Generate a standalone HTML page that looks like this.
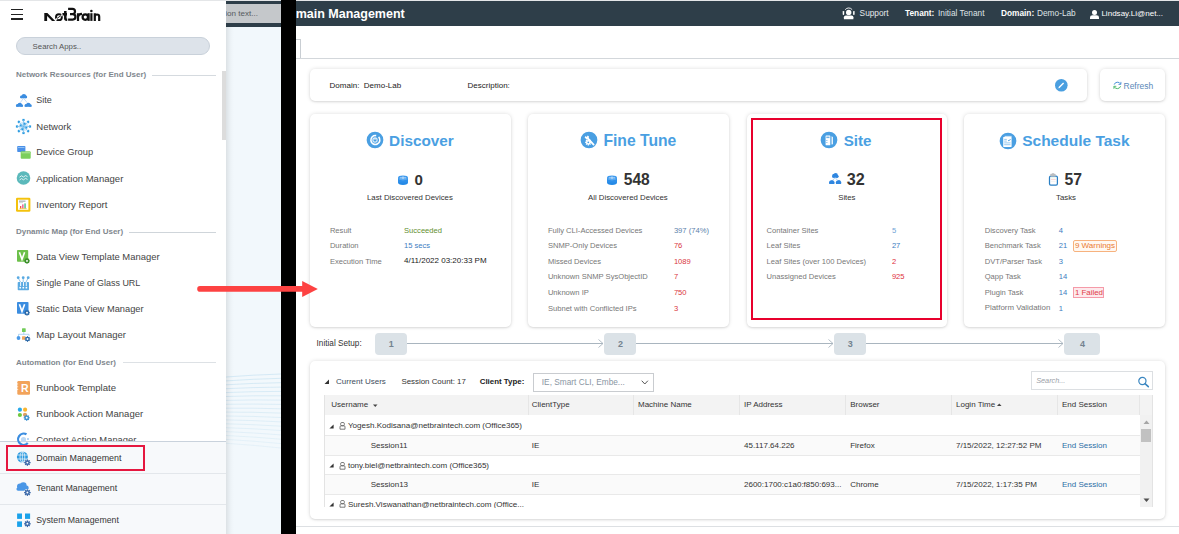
<!DOCTYPE html>
<html><head><meta charset="utf-8">
<style>
*{margin:0;padding:0;box-sizing:border-box}
html,body{width:1179px;height:534px;overflow:hidden;background:#fff;font-family:"Liberation Sans",sans-serif;color:#333}
.a{position:absolute}
.t{position:absolute;white-space:nowrap;line-height:1}
/* sidebar */
#side{position:absolute;left:0;top:0;width:226px;height:534px;background:#fff;overflow:hidden}
.si{font-size:9.4px;color:#444;left:36px}
.sh{font-size:8px;font-weight:bold;color:#7f878e;left:16px}
.shl{position:absolute;height:1px;background:#d5d9dd;right:10px}
.card{position:absolute;background:#fff;border-radius:5px;box-shadow:0 0 4px rgba(0,0,0,.13),0 1px 2px rgba(0,0,0,.09)}
.ct{font-size:15.5px;font-weight:bold;color:#4a9fe2}
.cn{font-size:15.5px;font-weight:bold;color:#333}
.cs{font-size:7.8px;color:#333}
.cl{font-size:7.6px;color:#6d6d6d}
.cv{font-size:7.6px}
.hd{font-size:8.3px;color:#fff}
</style></head><body>

<!-- main window -->
<div class="a" style="left:0;top:0;width:1179px;height:1px;background:#e4e6e8"></div>
<div class="a" style="left:226px;top:1px;width:953px;height:25px;background:#2e3e49"></div>
<div class="t" style="left:279px;top:8.2px;font-size:12.5px;font-weight:bold;color:#fff">Domain Management</div>

<!-- header right -->
<div class="t hd" style="left:859.6px;top:8.9px;color:#e6e9ec">Support</div>
<div class="t hd" style="left:905px;top:8.9px;font-weight:bold">Tenant:</div>
<div class="t hd" style="left:938px;top:8.9px;color:#dfe3e6">Initial Tenant</div>
<div class="t hd" style="left:1001px;top:8.9px;font-weight:bold">Domain:</div>
<div class="t hd" style="left:1037px;top:8.9px;color:#dfe3e6">Demo-Lab</div>
<div class="t hd" style="left:1101.4px;top:10.1px;font-size:8.05px">Lindsay.Li@net...</div>

<!-- tab & line -->
<div class="a" style="left:280px;top:39px;width:21px;height:20px;border:1px solid #c9ced3;border-bottom:none;background:#fff"></div>
<div class="a" style="left:296px;top:58px;width:883px;height:1px;background:#d3d7db"></div>

<!-- domain card -->
<div class="card" style="left:310px;top:69px;width:777px;height:32px"></div>
<div class="t" style="left:329.6px;top:81.7px;font-size:8px;color:#222">Domain:&nbsp; Demo-Lab</div>
<div class="t" style="left:467.6px;top:81.7px;font-size:8px;color:#222">Description:</div>
<div class="card" style="left:1100px;top:69px;width:65px;height:32px"></div>
<div class="t" style="left:1123.5px;top:81.6px;font-size:8.5px;color:#5a88b8">Refresh</div>

<!-- cards -->
<div class="card" style="left:310px;top:113.5px;width:201px;height:213.5px"></div>
<div class="card" style="left:528px;top:113.5px;width:201px;height:213.5px"></div>
<div class="card" style="left:747px;top:113.5px;width:200px;height:213.5px"></div>
<div class="card" style="left:964px;top:113.5px;width:201px;height:213.5px"></div>
<div class="a" style="left:751px;top:118px;width:191px;height:202px;border:2px solid #e8002d"></div>

<div class="t ct" style="left:389.1px;top:133.15px;font-size:15.3px">Discover</div>
<div class="t ct" style="left:603.4px;top:132.81px;font-size:15.7px">Fine Tune</div>
<div class="t ct" style="left:843.7px;top:133.23px;font-size:15.2px">Site</div>
<div class="t ct" style="left:1022.2px;top:132.98px;font-size:15.5px">Schedule Task</div>

<div class="t cn" style="left:414.4px;top:172.32px;font-size:15.1px">0</div>
<div class="t cn" style="left:623.8px;top:171.91px;font-size:15.58px">548</div>
<div class="t cn" style="left:846.7px;top:171.40px;font-size:16.18px">32</div>
<div class="t cn" style="left:1064.6px;top:172.08px;font-size:15.73px">57</div>

<div class="t cs" style="left:367px;top:193.6px">Last Discovered Devices</div>
<div class="t cs" style="left:588px;top:193.6px">All Discovered Devices</div>
<div class="t cs" style="left:838.2px;top:193.6px">Sites</div>
<div class="t cs" style="left:1056px;top:193.6px">Tasks</div>

<div class="t " style="left:329.9px;top:226.57px;font-size:7.6px;color:#777">Result</div>
<div class="t " style="left:404px;top:226.57px;font-size:7.6px;color:#5f8f2f">Succeeded</div>
<div class="t " style="left:329.9px;top:242.17px;font-size:7.6px;color:#777">Duration</div>
<div class="t " style="left:404px;top:242.17px;font-size:7.6px;color:#3d7dbf">15 secs</div>
<div class="t " style="left:329.9px;top:257.77px;font-size:7.6px;color:#777">Execution Time</div>
<div class="t " style="left:404px;top:257.43px;font-size:8px;color:#222">4/11/2022 03:20:33 PM</div>
<div class="t " style="left:547.9px;top:226.57px;font-size:7.6px;color:#777">Fully CLI-Accessed Devices</div>
<div class="t " style="left:673.9px;top:226.57px;font-size:7.6px;color:#5b82ab">397 (74%)</div>
<div class="t " style="left:547.9px;top:242.17px;font-size:7.6px;color:#777">SNMP-Only Devices</div>
<div class="t " style="left:673.9px;top:242.17px;font-size:7.6px;color:#d9363e">76</div>
<div class="t " style="left:547.9px;top:257.77px;font-size:7.6px;color:#777">Missed Devices</div>
<div class="t " style="left:673.9px;top:257.77px;font-size:7.6px;color:#d9363e">1089</div>
<div class="t " style="left:547.9px;top:273.37px;font-size:7.6px;color:#777">Unknown SNMP SysObjectID</div>
<div class="t " style="left:673.9px;top:273.37px;font-size:7.6px;color:#d9363e">7</div>
<div class="t " style="left:547.9px;top:288.97px;font-size:7.6px;color:#777">Unknown IP</div>
<div class="t " style="left:673.9px;top:288.97px;font-size:7.6px;color:#d9363e">750</div>
<div class="t " style="left:547.9px;top:304.57px;font-size:7.6px;color:#777">Subnet with Conflicted IPs</div>
<div class="t " style="left:673.9px;top:304.57px;font-size:7.6px;color:#d9363e">3</div>
<div class="t " style="left:766.5px;top:226.57px;font-size:7.6px;color:#777">Container Sites</div>
<div class="t " style="left:891.9px;top:226.57px;font-size:7.6px;color:#6fa3d6">5</div>
<div class="t " style="left:766.5px;top:242.17px;font-size:7.6px;color:#777">Leaf Sites</div>
<div class="t " style="left:891.9px;top:242.17px;font-size:7.6px;color:#3d7dbf">27</div>
<div class="t " style="left:766.5px;top:257.77px;font-size:7.6px;color:#777">Leaf Sites (over 100 Devices)</div>
<div class="t " style="left:891.9px;top:257.77px;font-size:7.6px;color:#e0303a">2</div>
<div class="t " style="left:766.5px;top:273.37px;font-size:7.6px;color:#777">Unassigned Devices</div>
<div class="t " style="left:891.9px;top:273.37px;font-size:7.6px;color:#e0303a">925</div>
<div class="t " style="left:984.7px;top:226.57px;font-size:7.6px;color:#777">Discovery Task</div>
<div class="t " style="left:1058.7px;top:226.57px;font-size:7.6px;color:#3d7dbf">4</div>
<div class="t " style="left:984.7px;top:242.17px;font-size:7.6px;color:#777">Benchmark Task</div>
<div class="t " style="left:1058.7px;top:242.17px;font-size:7.6px;color:#3d7dbf">21</div>
<div class="t " style="left:984.7px;top:257.77px;font-size:7.6px;color:#777">DVT/Parser Task</div>
<div class="t " style="left:1058.7px;top:257.77px;font-size:7.6px;color:#3d7dbf">3</div>
<div class="t " style="left:984.7px;top:273.37px;font-size:7.6px;color:#777">Qapp Task</div>
<div class="t " style="left:1058.7px;top:273.37px;font-size:7.6px;color:#3d7dbf">14</div>
<div class="t " style="left:984.7px;top:288.97px;font-size:7.6px;color:#777">Plugin Task</div>
<div class="t " style="left:1058.7px;top:288.97px;font-size:7.6px;color:#3d7dbf">14</div>
<div class="t " style="left:984.7px;top:304.31px;font-size:7.9px;color:#777">Platform Validation</div>
<div class="t " style="left:1058.7px;top:304.57px;font-size:7.6px;color:#3d7dbf">1</div>
<div class="a" style="left:1073px;top:239.5px;width:44px;height:12.3px;border:1px solid #f7b27e;background:#fff8f1;border-radius:2px"></div>
<div class="t " style="left:1074.9px;top:241.83px;font-size:8px;color:#ea7b33">9 Warnings</div>
<div class="a" style="left:1073px;top:287px;width:31px;height:11.3px;border:1px solid #f59aa8;background:#fde9ec;border-radius:0"></div>
<div class="t " style="left:1074.9px;top:288.71px;font-size:7.9px;color:#e0404a">1 Failed</div>
<div class="t " style="left:316.6px;top:340.1px;font-size:8.2px;color:#333">Initial Setup:</div>
<div class="a" style="left:375px;top:333.2px;width:31.5px;height:21.4px;background:#dbe2e7;border-radius:4px"></div>
<div class="t " style="left:388.85px;top:339.98px;font-size:9px;color:#74838f;font-weight:bold">1</div>
<div class="a" style="left:604px;top:333.2px;width:32px;height:21.4px;background:#dbe2e7;border-radius:4px"></div>
<div class="t " style="left:618.10px;top:339.98px;font-size:9px;color:#74838f;font-weight:bold">2</div>
<div class="a" style="left:834px;top:333.2px;width:31.5px;height:21.4px;background:#dbe2e7;border-radius:4px"></div>
<div class="t " style="left:847.85px;top:339.98px;font-size:9px;color:#74838f;font-weight:bold">3</div>
<div class="a" style="left:1063.6px;top:333.2px;width:36.4px;height:21.4px;background:#dbe2e7;border-radius:4px"></div>
<div class="t " style="left:1079.90px;top:339.98px;font-size:9px;color:#74838f;font-weight:bold">4</div>
<div class="a" style="left:406.5px;top:343px;width:196.5px;height:1px;background:#a9b5bf"></div>
<svg class="a" style="left:598px;top:339px" width="6" height="9"><path d="M0.5 0.5 L5 4.5 L0.5 8.5" fill="none" stroke="#a9b5bf" stroke-width="0.9"/></svg>
<div class="a" style="left:636px;top:343px;width:197px;height:1px;background:#a9b5bf"></div>
<svg class="a" style="left:828px;top:339px" width="6" height="9"><path d="M0.5 0.5 L5 4.5 L0.5 8.5" fill="none" stroke="#a9b5bf" stroke-width="0.9"/></svg>
<div class="a" style="left:865.5px;top:343px;width:197.0999999999999px;height:1px;background:#a9b5bf"></div>
<svg class="a" style="left:1057.6px;top:339px" width="6" height="9"><path d="M0.5 0.5 L5 4.5 L0.5 8.5" fill="none" stroke="#a9b5bf" stroke-width="0.9"/></svg>
<div class="card" style="left:310px;top:361px;width:855px;height:158px"></div>
<div class="a" style="left:296px;top:526px;width:883px;height:1px;background:#dde0e3"></div>
<svg class="a" style="left:323.5px;top:379px" width="6" height="6"><path d="M5 0.5 L5 5 L0.5 5 Z" fill="#333"/></svg>
<div class="t " style="left:336px;top:378.03px;font-size:8px;color:#3d4d5c">Current Users</div>
<div class="t " style="left:401.4px;top:378.11px;font-size:7.9px;color:#333">Session Count: 17</div>
<div class="t " style="left:479.7px;top:378.11px;font-size:7.9px;color:#222;font-weight:bold">Client Type:</div>
<div class="a" style="left:533.4px;top:373.3px;width:120.2px;height:19px;border:1px solid #c9ccd0;background:#fff"></div>
<div class="t " style="left:541.8px;top:378.47px;font-size:8.3px;color:#8a96a3">IE, Smart CLI, Embe...</div>
<svg class="a" style="left:641px;top:379.5px" width="8" height="6"><path d="M0.7 0.7 L3.8 4 L6.9 0.7" fill="none" stroke="#555" stroke-width="1"/></svg>
<div class="a" style="left:1031.3px;top:371.3px;width:121.4px;height:18.9px;border:1px solid #dcdfe2;background:#fff"></div>
<div class="t " style="left:1036.2px;top:377.42px;font-size:7.3px;color:#9aa0a6;font-style:italic">Search...</div>
<svg class="a" style="left:1137px;top:376px" width="14" height="13"><circle cx="5.4" cy="5" r="3.6" fill="none" stroke="#3a86c0" stroke-width="1.2"/><path d="M8 7.7 L11.3 10.6" stroke="#3a86c0" stroke-width="1.6" stroke-linecap="round"/></svg>
<div class="a" style="left:323.5px;top:394.8px;width:829.5px;height:112.6px;border-left:1px solid #e3e3e3;border-right:1px solid #e3e3e3;overflow:hidden">
<div class="a" style="left:0;top:0;width:830px;height:20.7px;background:#f3f3f3"></div>
<div class="a" style="left:203.0px;top:0;width:1px;height:20.2px;background:#e6e6e6"></div>
<div class="a" style="left:308.7px;top:0;width:1px;height:20.2px;background:#e6e6e6"></div>
<div class="a" style="left:414.9px;top:0;width:1px;height:20.2px;background:#e6e6e6"></div>
<div class="a" style="left:520.5px;top:0;width:1px;height:20.2px;background:#e6e6e6"></div>
<div class="a" style="left:626.6px;top:0;width:1px;height:20.2px;background:#e6e6e6"></div>
<div class="a" style="left:732.7px;top:0;width:1px;height:20.2px;background:#e6e6e6"></div>
<div class="a" style="left:814.6px;top:0;width:1px;height:20.2px;background:#e6e6e6"></div>
<div class="a" style="left:815px;top:20.2px;width:14px;height:93px;background:#f1f1f1"></div>
<div class="a" style="left:0;top:20.7px;width:815px;height:20.5px;background:#fff;border-bottom:1px solid #e9e9e9"></div>
<div class="a" style="left:0;top:41.2px;width:815px;height:20.2px;background:#fafafa;border-bottom:1px solid #e9e9e9"></div>
<div class="a" style="left:0;top:61.4px;width:815px;height:18.9px;background:#fff;border-bottom:1px solid #e9e9e9"></div>
<div class="a" style="left:0;top:80.3px;width:815px;height:20.4px;background:#fafafa;border-bottom:1px solid #e9e9e9"></div>
<div class="a" style="left:0;top:100.7px;width:815px;height:24.7px;background:#fff;border-bottom:1px solid #e9e9e9"></div>
</div>
<div class="t " style="left:331.3px;top:401.43px;font-size:8px;color:#333">Username</div>
<div class="t " style="left:531.8px;top:401.43px;font-size:8px;color:#333">ClientType</div>
<div class="t " style="left:638px;top:401.43px;font-size:8px;color:#333">Machine Name</div>
<div class="t " style="left:744px;top:401.43px;font-size:8px;color:#333">IP Address</div>
<div class="t " style="left:850.2px;top:401.43px;font-size:8px;color:#333">Browser</div>
<div class="t " style="left:956px;top:401.43px;font-size:8px;color:#333">Login Time</div>
<div class="t " style="left:1062px;top:401.43px;font-size:8px;color:#333">End Session</div>
<svg class="a" style="left:372.5px;top:403.6px" width="5" height="4"><path d="M0 0.5 L4.5 0.5 L2.25 3 Z" fill="#444"/></svg>
<svg class="a" style="left:997px;top:402.8px" width="5" height="4"><path d="M0 3 L4.5 3 L2.25 0.5 Z" fill="#444"/></svg>
<svg class="a" style="left:1142.5px;top:419.5px" width="7" height="5"><path d="M0.5 4 L6.5 4 L3.5 0.5 Z" fill="#a6a6a6"/></svg>
<div class="a" style="left:1140.5px;top:429px;width:10.5px;height:13px;background:#c1c1c1"></div>
<svg class="a" style="left:1142.5px;top:497.5px" width="7" height="5"><path d="M0.5 0.5 L6.5 0.5 L3.5 4 Z" fill="#505050"/></svg>
<svg class="a" style="left:328.5px;top:423.9px" width="6" height="6"><path d="M4.6 0.4 L4.6 4.6 L0.4 4.6 Z" fill="#333"/></svg>
<svg class="a" style="left:338.5px;top:422.3px" width="8" height="9"><rect x="1.6" y="0.5" width="3.8" height="3.2" rx="1.3" fill="none" stroke="#666" stroke-width="0.85"/><path d="M1 7.2 V4.9 Q1 3.8 2 3.8 H5 Q6 3.8 6 4.9 V7.2 Z" fill="none" stroke="#666" stroke-width="0.85"/></svg>
<div class="t " style="left:347.9px;top:422.44px;font-size:8.05px;color:#333">Yogesh.Kodisana@netbraintech.com (Office365)</div>
<div class="t " style="left:370.7px;top:441.93px;font-size:8px;color:#333">Session11</div>
<div class="t " style="left:531.7px;top:441.93px;font-size:8px;color:#333">IE</div>
<div class="t " style="left:744px;top:441.93px;font-size:8px;color:#333">45.117.64.226</div>
<div class="t " style="left:850.2px;top:441.93px;font-size:8px;color:#333">Firefox</div>
<div class="t " style="left:956px;top:441.93px;font-size:8px;color:#333">7/15/2022, 12:27:52 PM</div>
<div class="t " style="left:1062px;top:441.93px;font-size:8px;color:#2c6ea6">End Session</div>
<svg class="a" style="left:328.5px;top:463.4px" width="6" height="6"><path d="M4.6 0.4 L4.6 4.6 L0.4 4.6 Z" fill="#333"/></svg>
<svg class="a" style="left:338.5px;top:461.8px" width="8" height="9"><rect x="1.6" y="0.5" width="3.8" height="3.2" rx="1.3" fill="none" stroke="#666" stroke-width="0.85"/><path d="M1 7.2 V4.9 Q1 3.8 2 3.8 H5 Q6 3.8 6 4.9 V7.2 Z" fill="none" stroke="#666" stroke-width="0.85"/></svg>
<div class="t " style="left:347.9px;top:461.94px;font-size:8.05px;color:#333">tony.biel@netbraintech.com (Office365)</div>
<div class="t " style="left:370.7px;top:481.43px;font-size:8px;color:#333">Session13</div>
<div class="t " style="left:531.7px;top:481.43px;font-size:8px;color:#333">IE</div>
<div class="t " style="left:744px;top:481.43px;font-size:8px;color:#333">2600:1700:c1a0:f850:693...</div>
<div class="t " style="left:850.2px;top:481.43px;font-size:8px;color:#333">Chrome</div>
<div class="t " style="left:956px;top:481.43px;font-size:8px;color:#333">7/15/2022, 1:17:35 PM</div>
<div class="t " style="left:1062px;top:481.43px;font-size:8px;color:#2c6ea6">End Session</div>
<div class="a" style="left:324px;top:495.3px;width:500px;height:12.5px;overflow:hidden"><div style="position:relative;left:-324px;top:-495.3px"><svg class="a" style="left:328.5px;top:501.7px" width="6" height="6"><path d="M4.6 0.4 L4.6 4.6 L0.4 4.6 Z" fill="#333"/></svg>
<svg class="a" style="left:338.5px;top:500.3px" width="8" height="9"><rect x="1.6" y="0.5" width="3.8" height="3.2" rx="1.3" fill="none" stroke="#666" stroke-width="0.85"/><path d="M1 7.2 V4.9 Q1 3.8 2 3.8 H5 Q6 3.8 6 4.9 V7.2 Z" fill="none" stroke="#666" stroke-width="0.85"/></svg>
<div class="t " style="left:347.9px;top:500.9px;font-size:8.05px;color:#333">Suresh.Viswanathan@netbraintech.com (Office...</div>
</div></div>
<div class="a" style="left:281px;top:0;width:15px;height:534px;background:#000"></div>
<div class="a" style="left:226px;top:0;width:55px;height:534px;background:#f2f8fc;overflow:hidden">
<div class="a" style="left:0;top:0;width:55px;height:1px;background:#e4e6e8"></div><div class="a" style="left:0;top:1px;width:55px;height:25.5px;background:#2e3e49"></div><div class="a" style="left:0;top:3.9px;width:55px;height:18.9px;background:#c5c8cb"></div><div class="t" style="left:-0.8px;top:10.2px;font-size:8.1px;color:#565b60">ion text...</div><svg class="a" style="left:0;top:364px" width="55" height="100"><path d="M0 13.0 Q27 10.9 55 10.0" fill="none" stroke="#c8e3f2" stroke-width="0.8" opacity="0.90"/><path d="M0 16.9 Q27 15.0 55 14.3" fill="none" stroke="#c8e3f2" stroke-width="0.8" opacity="0.87"/><path d="M0 20.8 Q27 19.1 55 18.7" fill="none" stroke="#c8e3f2" stroke-width="0.8" opacity="0.84"/><path d="M0 24.7 Q27 23.3 55 23.1" fill="none" stroke="#c8e3f2" stroke-width="0.8" opacity="0.81"/><path d="M0 28.6 Q27 27.4 55 27.4" fill="none" stroke="#c8e3f2" stroke-width="0.8" opacity="0.78"/><path d="M0 32.5 Q27 31.5 55 31.8" fill="none" stroke="#c8e3f2" stroke-width="0.8" opacity="0.75"/><path d="M0 36.4 Q27 35.6 55 36.1" fill="none" stroke="#c8e3f2" stroke-width="0.8" opacity="0.72"/><path d="M0 40.3 Q27 39.8 55 40.4" fill="none" stroke="#c8e3f2" stroke-width="0.8" opacity="0.69"/><path d="M0 44.2 Q27 43.9 55 44.8" fill="none" stroke="#c8e3f2" stroke-width="0.8" opacity="0.66"/><path d="M0 48.1 Q27 48.0 55 49.1" fill="none" stroke="#c8e3f2" stroke-width="0.8" opacity="0.63"/><path d="M0 52.0 Q27 52.1 55 53.5" fill="none" stroke="#c8e3f2" stroke-width="0.8" opacity="0.60"/><path d="M0 55.9 Q27 56.3 55 57.9" fill="none" stroke="#c8e3f2" stroke-width="0.8" opacity="0.57"/><path d="M0 59.8 Q27 60.4 55 62.2" fill="none" stroke="#c8e3f2" stroke-width="0.8" opacity="0.54"/><path d="M0 63.7 Q27 64.5 55 66.5" fill="none" stroke="#c8e3f2" stroke-width="0.8" opacity="0.51"/><path d="M0 67.6 Q27 68.7 55 70.9" fill="none" stroke="#c8e3f2" stroke-width="0.8" opacity="0.48"/><path d="M0 71.5 Q27 72.8 55 75.2" fill="none" stroke="#c8e3f2" stroke-width="0.8" opacity="0.45"/><path d="M0 75.4 Q27 76.9 55 79.6" fill="none" stroke="#c8e3f2" stroke-width="0.8" opacity="0.42"/><path d="M0 79.3 Q27 81.0 55 84.0" fill="none" stroke="#c8e3f2" stroke-width="0.8" opacity="0.39"/></svg></div>
<div id="side">
<div class="a" style="left:0;top:0;width:226px;height:1px;background:#e4e6e8"></div>
<div class="a" style="left:11px;top:8.8px;width:12px;height:1.5px;background:#222"></div><div class="a" style="left:11px;top:13.5px;width:12px;height:1.5px;background:#222"></div><div class="a" style="left:11px;top:18.3px;width:12px;height:1.5px;background:#222"></div>
<svg class="a" style="left:0;top:0" width="110" height="26" viewBox="0 0 110 26"><g fill="none" stroke="#111" stroke-width="2.5" stroke-linecap="butt"><circle cx="58.9" cy="17.2" r="2.95" stroke-width="1.9"/><path d="M65.3 11.1 V18.6 Q65.3 19.7 66.8 19.7 H67.2 M62.4 14.3 H67"/></g><path d="M44.3 13 H47.4 L55.2 20.9 H52 Z M44.3 13 H47.1 V20.9 H44.3 Z" fill="#111"/><path d="M55.4 19.9 L62.4 14.6" stroke="#fff" stroke-width="1.5"/><path d="M56.8 18.6 L61.3 15.3" stroke="#111" stroke-width="0.9"/><g fill="none" stroke="#111" stroke-width="2.2" stroke-linecap="butt"><path d="M68.1 8.9 H72.4 A2.6 2.6 0 0 1 72.4 14.1 H70 M70 14.1 H72.7 A2.75 2.75 0 0 1 72.7 19.6 H68.1"/><path d="M78 20.9 V13.2 M78 16.8 Q78.4 14.1 82 13.9"/><circle cx="85.3" cy="17.1" r="2.7"/><path d="M88.6 13.2 V20.9"/><path d="M91.4 13.2 V20.9"/><path d="M94.8 20.9 V13.2 M94.8 16.7 A2.2 2.2 0 0 1 99.2 16.7 V20.9"/></g><circle cx="91.4" cy="10.9" r="1.25" fill="#111"/></svg>
<div class="a" style="left:16.3px;top:37px;width:194px;height:18px;border-radius:9px;background:#dde3ea;border:1px solid #c9d1da"></div>
<div class="t " style="left:32.6px;top:43.1px;font-size:7.8px;color:#555">Search Apps..</div>
<div class="t " style="left:16px;top:71.03px;font-size:8px;font-weight:bold;color:#7f878e">Network Resources (for End User)</div>
<div class="a" style="left:152px;top:75px;width:64.0px;height:1px;background:#d5dadf"></div>
<div class="t " style="left:16px;top:227.53px;font-size:8px;font-weight:bold;color:#7f878e">Dynamic Map (for End User)</div>
<div class="a" style="left:129px;top:232px;width:87.0px;height:1px;background:#cfd5da"></div>
<div class="t " style="left:16px;top:358.53px;font-size:8px;font-weight:bold;color:#7f878e">Automation (for End User)</div>
<div class="a" style="left:122.7px;top:362px;width:93.3px;height:1px;background:#dde1e5"></div>
<div class="t " style="left:36.3px;top:96.08px;font-size:9.0px;color:#444">Site</div>
<div class="t " style="left:36.3px;top:121.66px;font-size:9.5px;color:#444">Network</div>
<div class="t " style="left:36.3px;top:147.82px;font-size:9.31px;color:#444">Device Group</div>
<div class="t " style="left:36.3px;top:173.61px;font-size:9.55px;color:#444">Application Manager</div>
<div class="t " style="left:36.3px;top:199.54px;font-size:9.64px;color:#444">Inventory Report</div>
<div class="t " style="left:36.3px;top:252.21px;font-size:9.43px;color:#444">Data View Template Manager</div>
<div class="t " style="left:36.3px;top:278.51px;font-size:8.96px;color:#444">Single Pane of Glass URL</div>
<div class="t " style="left:36.3px;top:304.8px;font-size:9.31px;color:#444">Static Data View Manager</div>
<div class="t " style="left:36.3px;top:330.06px;font-size:9.49px;color:#444">Map Layout Manager</div>
<div class="t " style="left:36.3px;top:383.09px;font-size:9.58px;color:#444">Runbook Template</div>
<div class="t " style="left:36.3px;top:409.13px;font-size:9.53px;color:#444">Runbook Action Manager</div>
<div class="t " style="left:36.3px;top:435.24px;font-size:9.4px;color:#444">Context Action Manager</div>
<div class="a" style="left:222px;top:71px;width:4px;height:69px;background:#dcdcdc"></div>
<div class="a" style="left:0;top:441px;width:226px;height:93px;background:#f7f9fb;border-top:1px solid #c9d2dc"></div>
<div class="a" style="left:0;top:473px;width:226px;height:1px;background:#e3e7eb"></div>
<div class="a" style="left:0;top:503.5px;width:226px;height:1px;background:#e3e7eb"></div>
<svg class="a" style="left:15px;top:92px;overflow:visible" width="17" height="16" viewBox="0 0 17 16"><g transform="translate(8.5,4.299999999999997) scale(0.95,0.8)" fill="#3b8de0"><circle cx="-1.9" cy="0.6" r="1.7"/><circle cx="0.4" cy="-0.6" r="2.3"/><circle cx="2.2" cy="0.7" r="1.6"/><rect x="-3.6" y="0.6" width="7.4" height="1.7" rx="0.85"/></g><g transform="translate(4.399999999999999,13) scale(0.95,0.8)" fill="#3b8de0"><circle cx="-1.9" cy="0.6" r="1.7"/><circle cx="0.4" cy="-0.6" r="2.3"/><circle cx="2.2" cy="0.7" r="1.6"/><rect x="-3.6" y="0.6" width="7.4" height="1.7" rx="0.85"/></g><g transform="translate(13,13) scale(0.95,0.8)" fill="#3b8de0"><circle cx="-1.9" cy="0.6" r="1.7"/><circle cx="0.4" cy="-0.6" r="2.3"/><circle cx="2.2" cy="0.7" r="1.6"/><rect x="-3.6" y="0.6" width="7.4" height="1.7" rx="0.85"/></g><path d="M8.5 6.2 L5.2 10.8 M8.5 6.2 L12.3 10.8" stroke="#9cc6f2" stroke-width="0.6" fill="none"/></svg>
<svg class="a" style="left:15px;top:119px;overflow:visible" width="17" height="15" viewBox="0 0 17 15"><g transform="translate(8.5,7.5)" fill="#2a9ae0"><rect x="-1.1" y="-7.6" width="2.2" height="2.2" transform="rotate(0)"/><path d="M0 -6.4 L0 -2" stroke="#8ccaf0" stroke-width="0.6" transform="rotate(0)"/><rect x="-1.1" y="-7.6" width="2.2" height="2.2" transform="rotate(45)"/><path d="M0 -6.4 L0 -2" stroke="#8ccaf0" stroke-width="0.6" transform="rotate(45)"/><rect x="-1.1" y="-7.6" width="2.2" height="2.2" transform="rotate(90)"/><path d="M0 -6.4 L0 -2" stroke="#8ccaf0" stroke-width="0.6" transform="rotate(90)"/><rect x="-1.1" y="-7.6" width="2.2" height="2.2" transform="rotate(135)"/><path d="M0 -6.4 L0 -2" stroke="#8ccaf0" stroke-width="0.6" transform="rotate(135)"/><rect x="-1.1" y="-7.6" width="2.2" height="2.2" transform="rotate(180)"/><path d="M0 -6.4 L0 -2" stroke="#8ccaf0" stroke-width="0.6" transform="rotate(180)"/><rect x="-1.1" y="-7.6" width="2.2" height="2.2" transform="rotate(225)"/><path d="M0 -6.4 L0 -2" stroke="#8ccaf0" stroke-width="0.6" transform="rotate(225)"/><rect x="-1.1" y="-7.6" width="2.2" height="2.2" transform="rotate(270)"/><path d="M0 -6.4 L0 -2" stroke="#8ccaf0" stroke-width="0.6" transform="rotate(270)"/><rect x="-1.1" y="-7.6" width="2.2" height="2.2" transform="rotate(315)"/><path d="M0 -6.4 L0 -2" stroke="#8ccaf0" stroke-width="0.6" transform="rotate(315)"/><circle r="4.8" fill="#d3eaf9"/><circle r="3" fill="#bfe0f6"/><path d="M-4.5 -4.5 L4.5 4.5 M-4.5 4.5 L4.5 -4.5 M0 -5.5 L0 5.5 M-5.5 0 L5.5 0" stroke="#6bb8ec" stroke-width="0.6"/><rect x="-0.9" y="-3.9" width="1.8" height="1.8" transform="rotate(22)"/><rect x="-0.9" y="-3.9" width="1.8" height="1.8" transform="rotate(112)"/><rect x="-0.9" y="-3.9" width="1.8" height="1.8" transform="rotate(202)"/><rect x="-0.9" y="-3.9" width="1.8" height="1.8" transform="rotate(292)"/></g></svg>
<svg class="a" style="left:15px;top:145px;overflow:visible" width="17" height="15" viewBox="0 0 17 15"><rect x="2.2" y="1" width="8.2" height="6" rx="0.8" fill="#4a90e8"/><rect x="3" y="2" width="6.5" height="1" fill="#8fc0f5"/><rect x="5.7" y="6.3" width="10" height="7.4" rx="1" fill="#7ccf5c"/><rect x="6.5" y="7.3" width="8.5" height="1" fill="#b4e6a0"/></svg>
<svg class="a" style="left:15px;top:171px;overflow:visible" width="17" height="15" viewBox="0 0 17 15"><circle cx="8.5" cy="7" r="6.8" fill="#5bb9bb"/><path d="M4.5 6.2 L6.5 4.8 L8.5 6 L10.5 4.6 L12.5 5.6 M4.5 9 L6.5 7.6 L8.5 8.8 L10.5 7.4 L12.5 8.4" stroke="#fff" stroke-width="0.8" fill="none"/></svg>
<svg class="a" style="left:14.3px;top:196px;overflow:visible" width="17" height="16" viewBox="0 0 17 16"><rect x="2" y="1.7" width="14.4" height="14.1" rx="1.3" fill="#f4c20d"/><rect x="4" y="3.7" width="10.4" height="10.1" fill="#fff"/><rect x="5" y="4.6" width="6.5" height="1.1" fill="#a0a6ad"/><rect x="5" y="6.3" width="4" height="0.8" fill="#c8ccd0"/><rect x="6" y="10" width="1.3" height="2.6" fill="#f0504a"/><rect x="8.2" y="8.4" width="1.3" height="4.2" fill="#e84a8a"/><rect x="10.4" y="7.4" width="1.3" height="5.2" fill="#3cb878"/><rect x="5.4" y="12.5" width="7.4" height="0.6" fill="#f4c20d"/></svg>
<svg class="a" style="left:15px;top:250px;overflow:visible" width="17" height="15" viewBox="0 0 17 15"><rect x="2" y="0.1" width="11.2" height="11.7" rx="0.8" fill="#6cc04a"/><path d="M4.4 2.2 L7 9.3 L9.6 2.2" stroke="#fff" stroke-width="1.6" fill="none"/><g transform="translate(12,10.9)"><rect x="-0.55" y="-2.9" width="1.1" height="1.6" fill="#3d8f2c" transform="rotate(0)"/><rect x="-0.55" y="-2.9" width="1.1" height="1.6" fill="#3d8f2c" transform="rotate(45)"/><rect x="-0.55" y="-2.9" width="1.1" height="1.6" fill="#3d8f2c" transform="rotate(90)"/><rect x="-0.55" y="-2.9" width="1.1" height="1.6" fill="#3d8f2c" transform="rotate(135)"/><rect x="-0.55" y="-2.9" width="1.1" height="1.6" fill="#3d8f2c" transform="rotate(180)"/><rect x="-0.55" y="-2.9" width="1.1" height="1.6" fill="#3d8f2c" transform="rotate(225)"/><rect x="-0.55" y="-2.9" width="1.1" height="1.6" fill="#3d8f2c" transform="rotate(270)"/><rect x="-0.55" y="-2.9" width="1.1" height="1.6" fill="#3d8f2c" transform="rotate(315)"/><circle r="2.3" fill="#3d8f2c"/><circle r="0.9659999999999999" fill="#fff"/></g></svg>
<svg class="a" style="left:15px;top:275px;overflow:visible" width="17" height="17" viewBox="0 0 17 17"><g fill="#5aaae2"><circle cx="3.2" cy="2.7" r="1.4"/><circle cx="8.2" cy="2.7" r="1.4"/><circle cx="13.2" cy="2.7" r="1.4"/><path d="M3.2 3 L5.5 7 M8.2 3 L8.2 7 M13.2 3 L11 7" stroke="#5aaae2" stroke-width="0.7"/><rect x="2.7" y="7" width="11.3" height="8.3" rx="0.8"/></g><g fill="#fff"><rect x="5.2" y="7" width="0.9" height="4"/><rect x="8" y="7" width="0.9" height="4"/><rect x="10.8" y="7" width="0.9" height="4"/><circle cx="5.2" cy="12.7" r="0.9"/><circle cx="8.3" cy="12.7" r="0.9"/><circle cx="11.4" cy="12.7" r="0.9"/></g></svg>
<svg class="a" style="left:15px;top:302px;overflow:visible" width="17" height="15" viewBox="0 0 17 15"><rect x="2" y="0" width="11.5" height="11.8" rx="0.8" fill="#3b8de0"/><path d="M4.4 2.2 L7 9.3 L9.6 2.2" stroke="#fff" stroke-width="1.6" fill="none"/><g transform="translate(12,10.8)"><rect x="-0.55" y="-2.9" width="1.1" height="1.6" fill="#2d6aa8" transform="rotate(0)"/><rect x="-0.55" y="-2.9" width="1.1" height="1.6" fill="#2d6aa8" transform="rotate(45)"/><rect x="-0.55" y="-2.9" width="1.1" height="1.6" fill="#2d6aa8" transform="rotate(90)"/><rect x="-0.55" y="-2.9" width="1.1" height="1.6" fill="#2d6aa8" transform="rotate(135)"/><rect x="-0.55" y="-2.9" width="1.1" height="1.6" fill="#2d6aa8" transform="rotate(180)"/><rect x="-0.55" y="-2.9" width="1.1" height="1.6" fill="#2d6aa8" transform="rotate(225)"/><rect x="-0.55" y="-2.9" width="1.1" height="1.6" fill="#2d6aa8" transform="rotate(270)"/><rect x="-0.55" y="-2.9" width="1.1" height="1.6" fill="#2d6aa8" transform="rotate(315)"/><circle r="2.3" fill="#2d6aa8"/><circle r="0.9659999999999999" fill="#fff"/></g></svg>
<svg class="a" style="left:15px;top:328px;overflow:visible" width="17" height="15" viewBox="0 0 17 15"><rect x="7" y="0.2" width="3.7" height="3.8" rx="0.6" fill="#72cc58"/><path d="M8.8 4 L8.8 6.3 M3.5 8 L3.5 6.3 L14 6.3 L14 8" stroke="#8fc4ee" stroke-width="0.7" fill="none"/><circle cx="3.5" cy="10" r="1.9" fill="#4a9ae8"/><rect x="7" y="8.2" width="3.5" height="3.6" rx="0.5" fill="#f0a860"/><g transform="translate(12.5,11)"><rect x="-0.55" y="-2.8000000000000003" width="1.1" height="1.6" fill="#2d6aa8" transform="rotate(0)"/><rect x="-0.55" y="-2.8000000000000003" width="1.1" height="1.6" fill="#2d6aa8" transform="rotate(45)"/><rect x="-0.55" y="-2.8000000000000003" width="1.1" height="1.6" fill="#2d6aa8" transform="rotate(90)"/><rect x="-0.55" y="-2.8000000000000003" width="1.1" height="1.6" fill="#2d6aa8" transform="rotate(135)"/><rect x="-0.55" y="-2.8000000000000003" width="1.1" height="1.6" fill="#2d6aa8" transform="rotate(180)"/><rect x="-0.55" y="-2.8000000000000003" width="1.1" height="1.6" fill="#2d6aa8" transform="rotate(225)"/><rect x="-0.55" y="-2.8000000000000003" width="1.1" height="1.6" fill="#2d6aa8" transform="rotate(270)"/><rect x="-0.55" y="-2.8000000000000003" width="1.1" height="1.6" fill="#2d6aa8" transform="rotate(315)"/><circle r="2.2" fill="#2d6aa8"/><circle r="0.924" fill="#fff"/></g></svg>
<svg class="a" style="left:15px;top:381px;overflow:visible" width="17" height="15" viewBox="0 0 17 15"><rect x="2.3" y="0" width="12.7" height="13.7" rx="1.2" fill="#f2a35a"/><rect x="1.6" y="2.5" width="1.6" height="0.9" fill="#fff" opacity=".7"/><rect x="1.6" y="5.3" width="1.6" height="0.9" fill="#fff" opacity=".7"/><rect x="1.6" y="8.1" width="1.6" height="0.9" fill="#fff" opacity=".7"/><text x="6" y="11" font-family="Liberation Sans" font-weight="bold" font-size="10.5" fill="#fff">R</text></svg>
<svg class="a" style="left:15px;top:407px;overflow:visible" width="17" height="15" viewBox="0 0 17 15"><circle cx="4.9" cy="2.7" r="2.1" fill="#28a9ea"/><circle cx="10.1" cy="2.7" r="2.1" fill="#f9b52e"/><circle cx="4.9" cy="8" r="2.1" fill="#70c840"/><circle cx="10" cy="7.8" r="2.1" fill="#e0a060"/><g transform="translate(11.7,10.8)"><rect x="-0.55" y="-3.0" width="1.1" height="1.6" fill="#3a90d0" transform="rotate(0)"/><rect x="-0.55" y="-3.0" width="1.1" height="1.6" fill="#3a90d0" transform="rotate(45)"/><rect x="-0.55" y="-3.0" width="1.1" height="1.6" fill="#3a90d0" transform="rotate(90)"/><rect x="-0.55" y="-3.0" width="1.1" height="1.6" fill="#3a90d0" transform="rotate(135)"/><rect x="-0.55" y="-3.0" width="1.1" height="1.6" fill="#3a90d0" transform="rotate(180)"/><rect x="-0.55" y="-3.0" width="1.1" height="1.6" fill="#3a90d0" transform="rotate(225)"/><rect x="-0.55" y="-3.0" width="1.1" height="1.6" fill="#3a90d0" transform="rotate(270)"/><rect x="-0.55" y="-3.0" width="1.1" height="1.6" fill="#3a90d0" transform="rotate(315)"/><circle r="2.4" fill="#3a90d0"/><circle r="1.008" fill="#fff"/></g></svg>
<svg class="a" style="left:15px;top:432px;overflow:visible" width="17" height="15" viewBox="0 0 17 15"><path d="M11.5 2.3 A5.6 5.6 0 1 0 12.8 11" stroke="#3b8de0" stroke-width="2.2" fill="none"/><circle cx="8.5" cy="7.5" r="2.6" fill="#bcd9f5"/><circle cx="13" cy="7" r="0.7" fill="#3b8de0"/></svg>
<svg class="a" style="left:15px;top:450.5px;overflow:visible" width="17" height="15" viewBox="0 0 17 15"><circle cx="7.4" cy="6" r="5.5" fill="#2d9be0"/><g stroke="#f7f9fb" stroke-width="0.7" fill="none"><ellipse cx="7.4" cy="6" rx="2.4" ry="5.5"/><path d="M7.4 0.5 V11.5 M2 4 H12.8 M2 8 H12.8"/></g><g transform="translate(12.4,11.6)"><circle r="3.4" fill="#f7f9fb"/><rect x="-0.65" y="-3.20" width="1.3" height="1.8" fill="#3a68a8" transform="rotate(0)"/><rect x="-0.65" y="-3.20" width="1.3" height="1.8" fill="#3a68a8" transform="rotate(45)"/><rect x="-0.65" y="-3.20" width="1.3" height="1.8" fill="#3a68a8" transform="rotate(90)"/><rect x="-0.65" y="-3.20" width="1.3" height="1.8" fill="#3a68a8" transform="rotate(135)"/><rect x="-0.65" y="-3.20" width="1.3" height="1.8" fill="#3a68a8" transform="rotate(180)"/><rect x="-0.65" y="-3.20" width="1.3" height="1.8" fill="#3a68a8" transform="rotate(225)"/><rect x="-0.65" y="-3.20" width="1.3" height="1.8" fill="#3a68a8" transform="rotate(270)"/><rect x="-0.65" y="-3.20" width="1.3" height="1.8" fill="#3a68a8" transform="rotate(315)"/><circle r="2.3" fill="#3a68a8"/><circle r="0.97" fill="#fff"/></g></svg>
<svg class="a" style="left:15px;top:482.3px;overflow:visible" width="17" height="15" viewBox="0 0 17 15"><g fill="#4a97e6"><circle cx="5" cy="4.6" r="3"/><circle cx="8.3" cy="3.6" r="3.3"/><circle cx="11.5" cy="5.8" r="2.2"/><rect x="1.4" y="5.4" width="12" height="3.4" rx="1.7"/></g><g transform="translate(12.4,10.6)"><circle r="3.5" fill="#f7f9fb"/><rect x="-0.65" y="-3.30" width="1.3" height="1.8" fill="#3a68a8" transform="rotate(0)"/><rect x="-0.65" y="-3.30" width="1.3" height="1.8" fill="#3a68a8" transform="rotate(45)"/><rect x="-0.65" y="-3.30" width="1.3" height="1.8" fill="#3a68a8" transform="rotate(90)"/><rect x="-0.65" y="-3.30" width="1.3" height="1.8" fill="#3a68a8" transform="rotate(135)"/><rect x="-0.65" y="-3.30" width="1.3" height="1.8" fill="#3a68a8" transform="rotate(180)"/><rect x="-0.65" y="-3.30" width="1.3" height="1.8" fill="#3a68a8" transform="rotate(225)"/><rect x="-0.65" y="-3.30" width="1.3" height="1.8" fill="#3a68a8" transform="rotate(270)"/><rect x="-0.65" y="-3.30" width="1.3" height="1.8" fill="#3a68a8" transform="rotate(315)"/><circle r="2.4" fill="#3a68a8"/><circle r="1.01" fill="#fff"/></g></svg>
<svg class="a" style="left:15px;top:509px;overflow:visible" width="17" height="17" viewBox="0 0 17 17"><g fill="#1aa2ea"><rect x="2.1" y="4.5" width="4.9" height="5.4"/><rect x="10" y="4.5" width="5.1" height="5.4"/><rect x="2.1" y="12.4" width="4.9" height="5.5"/></g><g transform="translate(12.4,14.8)"><circle r="3.5" fill="#f7f9fb"/><rect x="-0.65" y="-3.30" width="1.3" height="1.8" fill="#3a68a8" transform="rotate(0)"/><rect x="-0.65" y="-3.30" width="1.3" height="1.8" fill="#3a68a8" transform="rotate(45)"/><rect x="-0.65" y="-3.30" width="1.3" height="1.8" fill="#3a68a8" transform="rotate(90)"/><rect x="-0.65" y="-3.30" width="1.3" height="1.8" fill="#3a68a8" transform="rotate(135)"/><rect x="-0.65" y="-3.30" width="1.3" height="1.8" fill="#3a68a8" transform="rotate(180)"/><rect x="-0.65" y="-3.30" width="1.3" height="1.8" fill="#3a68a8" transform="rotate(225)"/><rect x="-0.65" y="-3.30" width="1.3" height="1.8" fill="#3a68a8" transform="rotate(270)"/><rect x="-0.65" y="-3.30" width="1.3" height="1.8" fill="#3a68a8" transform="rotate(315)"/><circle r="2.4" fill="#3a68a8"/><circle r="1.01" fill="#fff"/></g></svg>
<div class="a" style="left:5.5px;top:445.2px;width:139.5px;height:26.2px;border:2px solid #e5173f"></div>
<div class="t " style="left:36.3px;top:453.56px;font-size:8.91px;color:#333">Domain Management</div>
<div class="t " style="left:36.3px;top:484.39px;font-size:8.88px;color:#383838">Tenant Management</div>
<div class="t " style="left:36.3px;top:515.60px;font-size:8.74px;color:#383838">System Management</div>
</div>
<div class="a" style="left:226px;top:26px;width:8px;height:508px;background:linear-gradient(to right,rgba(0,0,0,.09),rgba(0,0,0,.02) 60%,rgba(0,0,0,0))"></div>
<svg class="a" style="left:196px;top:280px" width="125" height="19"><path d="M4 8.9 L106 8.9" stroke="#fd4242" stroke-width="5.6" stroke-linecap="round"/><path d="M106.2 0.9 L121.8 8.9 L106.2 17.1 Z" fill="#fd4242"/></svg>
<svg class="a" style="left:365.6px;top:131.1px;overflow:visible" width="18" height="18" viewBox="0 0 18 18"><circle cx="9" cy="9" r="8.35" fill="#4a9fe2"/><path d="M12.6 5.9 A4.5 4.5 0 1 1 10.2 4.6" fill="none" stroke="#fff" stroke-width="1.6"/><circle cx="9" cy="9" r="2.1" fill="none" stroke="#d8ecfa" stroke-width="1.2"/><path d="M9 9 L9 7" stroke="#fff" stroke-width="0.8"/></svg>
<svg class="a" style="left:579.6px;top:131.2px;overflow:visible" width="18" height="18" viewBox="0 0 18 18"><circle cx="9" cy="9" r="8.35" fill="#4a9fe2"/><path d="M7.6 7.2 L13.6 13.6" stroke="#fff" stroke-width="1.9" stroke-linecap="round"/><path d="M4.6 6.4 L5.6 4.9 L6.8 5.9 L7.6 4.4 L8.9 5.2 L8.6 7.9 L6.6 8.4 Z" fill="#fff"/><g transform="translate(8.3,11.3)"><rect x="-0.65" y="-3.2" width="1.3" height="1.5" fill="#fff" transform="rotate(0)"/><rect x="-0.65" y="-3.2" width="1.3" height="1.5" fill="#fff" transform="rotate(45)"/><rect x="-0.65" y="-3.2" width="1.3" height="1.5" fill="#fff" transform="rotate(90)"/><rect x="-0.65" y="-3.2" width="1.3" height="1.5" fill="#fff" transform="rotate(135)"/><rect x="-0.65" y="-3.2" width="1.3" height="1.5" fill="#fff" transform="rotate(180)"/><rect x="-0.65" y="-3.2" width="1.3" height="1.5" fill="#fff" transform="rotate(225)"/><rect x="-0.65" y="-3.2" width="1.3" height="1.5" fill="#fff" transform="rotate(270)"/><rect x="-0.65" y="-3.2" width="1.3" height="1.5" fill="#fff" transform="rotate(315)"/><circle r="2.3" fill="#fff"/><circle r="0.9" fill="#4a9fe2"/></g></svg>
<svg class="a" style="left:820px;top:131.4px;overflow:visible" width="18" height="18" viewBox="0 0 18 18"><circle cx="9" cy="9" r="8.35" fill="#4a9fe2"/><rect x="5.6" y="4.6" width="4.7" height="9.6" rx="0.5" fill="#fff"/><rect x="6.3" y="5.6" width="3.2" height="1.5" fill="#4a9fe2" opacity=".8"/><rect x="6.3" y="9" width="1.1" height="0.9" fill="#4a9fe2" opacity=".8"/><rect x="6.3" y="11" width="1.1" height="0.9" fill="#4a9fe2" opacity=".8"/><path d="M11.5 5.3 L13 6 V13.3 L11.5 13.6 Z" fill="#e6f2fb"/></svg>
<svg class="a" style="left:998.8px;top:131.6px;overflow:visible" width="18" height="18" viewBox="0 0 18 18"><circle cx="9" cy="9" r="8.35" fill="#4a9fe2"/><rect x="5.6" y="3.9" width="7" height="0.9" fill="#e8f3fc"/><rect x="4.2" y="4.9" width="8.4" height="10" rx="0.4" fill="#fff"/><g stroke="#7fbdec" stroke-width="0.8"><path d="M5.2 7.4 H7.8 M5.2 9.1 H7.8 M5.2 10.9 H11.5 M5.2 12.7 H11.5"/></g><path d="M9 8.3 L10 8.9 L11.5 7" fill="none" stroke="#4a9fe2" stroke-width="0.9"/></svg>
<svg class="a" style="left:398px;top:174.8px;overflow:visible" width="10" height="10" viewBox="0 0 10 10"><ellipse cx="5" cy="7.6" rx="5" ry="2.4" fill="#2489e6"/><rect x="0" y="2.8" width="10" height="4.8" fill="#2d8fea"/><ellipse cx="5" cy="2.8" rx="5" ry="2.3" fill="#3f9aee"/><path d="M1.8 2.9 H8.2 M5 1.4 V4.3" stroke="#cfe6fb" stroke-width="0.9"/><path d="M0.5 3.9 Q5 6.2 9.5 3.9" stroke="#7cbcf3" stroke-width="0.5" fill="none"/></svg>
<svg class="a" style="left:607px;top:174.8px;overflow:visible" width="10" height="10" viewBox="0 0 10 10"><ellipse cx="5" cy="7.6" rx="5" ry="2.4" fill="#2489e6"/><rect x="0" y="2.8" width="10" height="4.8" fill="#2d8fea"/><ellipse cx="5" cy="2.8" rx="5" ry="2.3" fill="#3f9aee"/><path d="M1.8 2.9 H8.2 M5 1.4 V4.3" stroke="#cfe6fb" stroke-width="0.9"/><path d="M0.5 3.9 Q5 6.2 9.5 3.9" stroke="#7cbcf3" stroke-width="0.5" fill="none"/></svg>
<svg class="a" style="left:824px;top:168px;overflow:visible" width="22" height="22" viewBox="0 0 22 22"><g fill="#2f86e0"><circle cx="10.08" cy="7.73" r="1.93"/><circle cx="11.70" cy="7.13" r="2.12"/><circle cx="13.06" cy="8.19" r="1.52"/><rect x="8.10" y="7.73" width="6.20" height="2.07" rx="1.01"/><circle cx="6.76" cy="14.25" r="1.64"/><circle cx="8.12" cy="13.74" r="1.79"/><circle cx="9.26" cy="14.63" r="1.29"/><rect x="5.10" y="14.25" width="5.20" height="1.75" rx="0.86"/><circle cx="13.56" cy="14.25" r="1.64"/><circle cx="14.92" cy="13.74" r="1.79"/><circle cx="16.06" cy="14.63" r="1.29"/><rect x="11.90" y="14.25" width="5.20" height="1.75" rx="0.86"/></g><path d="M835.2 177.6 L832.5 180.4 M835.2 177.6 L837.6 180.4" transform="translate(-824,-168)" stroke="#8fc0f0" stroke-width="0.7"/></svg>
<svg class="a" style="left:1047.8px;top:173px;overflow:visible" width="11" height="13" viewBox="0 0 11 13"><rect x="1.5" y="3.2" width="7.9" height="8.9" rx="1.3" fill="#fff" stroke="#2a7fc4" stroke-width="1.25"/><rect x="2.3" y="0.8" width="5.3" height="2.6" rx="0.6" fill="#b9bdc1"/><rect x="4.3" y="0" width="1.4" height="1.2" fill="#b9bdc1"/><path d="M3 4.8 H7.8" stroke="#cfe9cf" stroke-width="0.5"/><path d="M3 6.6 H7.8" stroke="#f5b8b8" stroke-width="0.6"/><path d="M3 8.6 H7.8" stroke="#e6e6e6" stroke-width="0.5"/></svg>
<svg class="a" style="left:1055px;top:79px;overflow:visible" width="13" height="13" viewBox="0 0 13 13"><circle cx="6.3" cy="6.3" r="6.3" fill="#4a9fe0"/><path d="M3.8 8.8 L8.6 4" stroke="#fff" stroke-width="1.4" stroke-linecap="butt"/><path d="M3.3 9.3 L3.8 8.8" stroke="#fff" stroke-width="0.8"/></svg>
<svg class="a" style="left:1112.5px;top:81.4px;overflow:visible" width="9" height="9" viewBox="0 0 9 9"><path d="M7.6 3 A3.5 3.5 0 0 0 1.2 3.6" stroke="#4a90d8" stroke-width="1" fill="none"/><path d="M7.9 0.9 L7.9 3.4 L5.5 3.4" stroke="#4a90d8" stroke-width="0.9" fill="none"/><path d="M1.1 5.6 A3.5 3.5 0 0 0 7.6 5.2" stroke="#4cb86a" stroke-width="1" fill="none"/><path d="M0.9 7.8 L0.9 5.3 L3.3 5.3" stroke="#4cb86a" stroke-width="0.9" fill="none"/></svg>
<svg class="a" style="left:838px;top:4px;overflow:visible" width="22" height="20" viewBox="0 0 22 20"><circle cx="10.7" cy="8.4" r="2.7" fill="#fff"/><path d="M7.2 5.7 A4.4 4.4 0 0 1 14.2 5.7" fill="none" stroke="#fff" stroke-width="0.9"/><rect x="4.7" y="6.9" width="1.5" height="4" rx="0.7" fill="#fff"/><rect x="15.1" y="6.9" width="1.5" height="4" rx="0.7" fill="#fff"/><path d="M5.9 15.2 V13.3 Q5.9 11.6 7.9 11.6 H13.5 Q15.4 11.6 15.4 13.3 V15.2 Z" fill="#fff"/></svg>
<svg class="a" style="left:1090.2px;top:10px;overflow:visible" width="9" height="9" viewBox="0 0 9 9"><circle cx="4.5" cy="2.6" r="2.5" fill="#fff"/><path d="M0 9 L0 7.3 Q0 5.2 2.5 5.2 L6.5 5.2 Q9 5.2 9 7.3 L9 9 Z" fill="#fff"/></svg>
</body></html>
